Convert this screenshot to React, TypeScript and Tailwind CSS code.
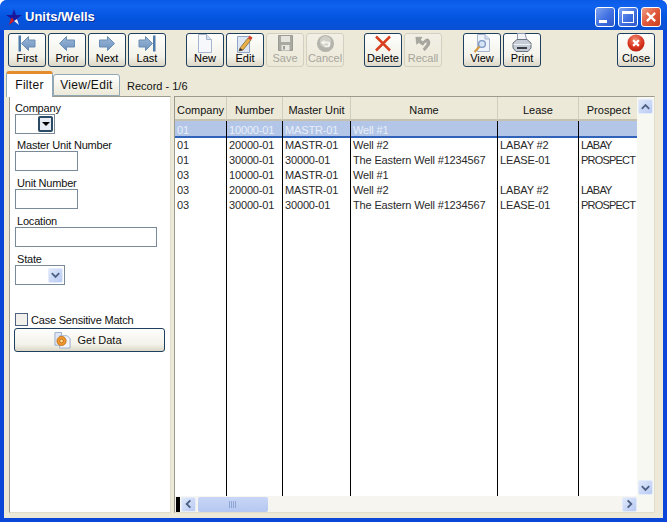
const font = "[font-family:'Liberation_Sans',Arial,sans-serif]";

function ArrowIcon({ dir, bar }: { dir: 'left' | 'right'; bar?: boolean }) {
  return (
    <svg width="18" height="17" viewBox="0 0 18 17" className={dir === 'right' ? '-scale-x-100' : ''}>
      <defs>
        <linearGradient id="arr" x1="0" y1="0" x2="0" y2="1">
          <stop offset="0" stopColor="#9db8d8" />
          <stop offset="1" stopColor="#6d92bf" />
        </linearGradient>
      </defs>
      {bar ? (
        <>
          <rect x="0.5" y="0.5" width="2.5" height="16" fill="#4f7ba8" />
          <path d="M3.5 8.5 L10.5 1.5 V5 H17 V12 H10.5 V15.5 Z" fill="url(#arr)" stroke="#6a8db5" />
        </>
      ) : (
        <path d="M1.5 8.5 L8.5 1.5 V5 H16.5 V12 H8.5 V15.5 Z" fill="url(#arr)" stroke="#6a8db5" />
      )}
    </svg>
  );
}

function DocIcon() {
  return (
    <svg width="18" height="19" viewBox="0 0 18 19">
      <path d="M2.5 0.5 H10.5 L15.5 5.5 V18.5 H2.5 Z" fill="#f6f8fc" stroke="#a6b6d0" />
      <path d="M10.5 0.5 V5.5 H15.5" fill="#d9e1ef" stroke="#a6b6d0" />
    </svg>
  );
}

function EditIcon() {
  return (
    <svg width="18" height="19" viewBox="0 0 18 19">
      <path d="M1.5 2.5 H13.5 V18.5 H1.5 Z" fill="#dfe6f4" stroke="#93a5c6" />
      <path d="M4 14 L12 4 L15 6 L7 16 L3 17 Z" fill="#e8b048" stroke="#7a5c30" strokeWidth="0.7" />
      <path d="M12 4 L13.7 1.6 L16.6 3.8 L15 6 Z" fill="#d8402c" />
      <path d="M3 17 L4 14 L7 16 Z" fill="#33343a" />
    </svg>
  );
}

function SaveIcon() {
  return (
    <svg width="15" height="16" viewBox="0 0 15 16">
      <path d="M0.5 0.5 H14.5 V15.5 H0.5 Z" fill="#a9a9a2" stroke="#9b9b94" />
      <rect x="3" y="1" width="9" height="6" fill="#e6e5dd" />
      <rect x="3.5" y="10" width="8" height="5.5" fill="#e9e8e0" />
      <rect x="5" y="11" width="2" height="3.5" fill="#9d9d96" />
    </svg>
  );
}

function CancelIcon() {
  return (
    <svg width="19" height="19" viewBox="0 0 20 20">
      <circle cx="10" cy="10" r="9" fill="#b4b3ab" />
      <circle cx="10" cy="8" r="6" fill="#cfcec7" />
      <path d="M5 9 L9 6 V8 H12.5 Q15 8 15 11 Q15 14 12 14 H9 V12 H12 Q13 12 13 11 Q13 10 12 10 H9 V12 Z" fill="#f4f3ee" />
    </svg>
  );
}

function DeleteIcon() {
  return (
    <svg width="18" height="17" viewBox="0 0 18 17">
      <path d="M2 1.5 L16 15.5 M16 1.5 L2 15.5" stroke="#d8401f" strokeWidth="2.5" />
    </svg>
  );
}

function RecallIcon() {
  return (
    <svg width="18" height="17" viewBox="0 0 20 18">
      <path d="M2 2 L9 2 L7 5 L10 7 Q13 3 16 4 Q19 7 17 11 L12 17 L10 15 L14 10 Q15 8 14 7 Q12 7 10 11 L5 8 L3 10 Z" fill="#a8a79f" stroke="#8f8e87" strokeWidth="0.5" />
    </svg>
  );
}

function ViewIcon() {
  return (
    <svg width="18" height="19" viewBox="0 0 18 19">
      <path d="M4.5 0.5 H12 L16.5 5 V17.5 H4.5 Z" fill="#eef2fa" stroke="#a6b6d0" />
      <path d="M12 0.5 V5 H16.5" fill="#d9e1ef" stroke="#a6b6d0" />
      <circle cx="9" cy="10" r="3.4" fill="#d5e4f6" stroke="#7c98c0" strokeWidth="1.3" />
      <path d="M6.5 12.5 L1.5 18" stroke="#d59a42" strokeWidth="2" />
    </svg>
  );
}

function PrintIcon() {
  return (
    <svg width="20" height="20" viewBox="0 0 20 20">
      <path d="M5.5 0.5 H13 L15 8 H5.5 Z" fill="#f2f4f8" stroke="#8f9bb0" />
      <path d="M1 10 L5 6.5 H15 L19 10 V15 L16 18.5 H4 L1 15 Z" fill="#c6ccd6" stroke="#69727f" />
      <path d="M1.5 11.5 H18.5" stroke="#eef0f4" />
      <rect x="5" y="14" width="10" height="2" fill="#3a3f47" />
    </svg>
  );
}

function CloseIcon() {
  return (
    <svg width="18" height="18" viewBox="0 0 20 20">
      <defs>
        <radialGradient id="cl" cx="0.45" cy="0.3" r="0.8">
          <stop offset="0" stopColor="#f08a70" />
          <stop offset="0.6" stopColor="#d8321c" />
          <stop offset="1" stopColor="#a8200f" />
        </radialGradient>
      </defs>
      <circle cx="10" cy="10" r="9.5" fill="url(#cl)" />
      <path d="M6.8 6.8 L13.2 13.2 M13.2 6.8 L6.8 13.2" stroke="#fff" strokeWidth="2.4" />
    </svg>
  );
}

function GearDocIcon() {
  return (
    <svg width="17" height="17" viewBox="0 0 18 18">
      <path d="M1 0.5 H8 V14 H1 Z" fill="#dfe6f3" stroke="#9aaccb" />
      <path d="M6 4 H14 L17 7 V17 H6 Z" fill="#f1f4fa" stroke="#9aaccb" />
      <circle cx="8" cy="9.5" r="4.8" fill="#ee9a2e" stroke="#c8701a" />
      <circle cx="8" cy="9.5" r="2" fill="#f8d890" stroke="#c8701a" />
    </svg>
  );
}

type Tool = { label: string; icon: React.ReactNode; off?: boolean };

function ToolButton({ label, icon, off }: Tool) {
  return (
    <button
      className={
        'flex flex-col items-center w-[38px] h-[34px] rounded-[3px] border text-[11px] leading-[13px] ' +
        (off
          ? 'border-[#d3d0c2] text-[#a6a59c] bg-[linear-gradient(#f2f0e6,#ece9d8)]'
          : 'border-[#1f3f5f] text-black bg-[linear-gradient(#fefefd,#f3f2ea_70%,#dcd8c8)]')
      }
    >
      <span className="h-[18px] flex items-center justify-center">{icon}</span>
      <span>{label}</span>
    </button>
  );
}

function StarIcon() {
  return (
    <svg width="16" height="16" viewBox="0 0 16 16">
      <path d="M8 0 L10 6 H16 L11 9.5 L13 16 L8 12 L3 16 L5 9.5 L0 6 H6 Z" fill="#1a1a9c" />
      <path d="M5 9.5 L3 16 L8 12 L6.5 9 Z" fill="#d02028" />
      <path d="M8 12 L13 16 L11 10 Z" fill="#f2f2f8" />
    </svg>
  );
}

function TitleButton({ kind }: { kind: 'min' | 'max' | 'close' }) {
  const bg =
    kind === 'close'
      ? 'bg-[linear-gradient(135deg,#f0a08a,#e0583a_50%,#c8401f)]'
      : 'bg-[linear-gradient(135deg,#7fa4f0,#3f6fe0_55%,#2f58c8)]';
  return (
    <div className={'w-[20px] h-[20px] rounded-[3px] border border-white flex items-center justify-center ' + bg}>
      {kind === 'min' && <div className="w-[8px] h-[3px] bg-white self-end mb-[3px] mr-[4px]" />}
      {kind === 'max' && <div className="w-[12px] h-[12px] border border-white border-t-[3px]" />}
      {kind === 'close' && (
        <svg width="12" height="12" viewBox="0 0 13 13">
          <path d="M2 2 L11 11 M11 2 L2 11" stroke="#fff" strokeWidth="2.4" />
        </svg>
      )}
    </div>
  );
}

function Chevron({ dir }: { dir: 'up' | 'down' | 'left' | 'right' }) {
  const d = {
    up: 'M3 9 L7 5 L11 9',
    down: 'M3 5 L7 9 L11 5',
    left: 'M9 3 L5 7 L9 11',
    right: 'M5 3 L9 7 L5 11',
  }[dir];
  return (
    <div className="w-[15px] h-[15px] rounded-[2px] flex items-center justify-center bg-[linear-gradient(135deg,#dfe8fb,#b9cbf3)] border border-[#e4ecfb]">
      <svg width="14" height="14" viewBox="0 0 14 14">
        <path d={d} fill="none" stroke="#4d6185" strokeWidth="2" />
      </svg>
    </div>
  );
}

const columns = [
  { title: 'Company', w: 'w-[52px]', cells: ['01', '01', '01', '03', '03', '03'] },
  { title: 'Number', w: 'w-[56px]', cells: ['10000-01', '20000-01', '30000-01', '10000-01', '20000-01', '30000-01'] },
  { title: 'Master Unit', w: 'w-[68px]', cells: ['MASTR-01', 'MASTR-01', '30000-01', 'MASTR-01', 'MASTR-01', '30000-01'] },
  {
    title: 'Name',
    w: 'w-[147px]',
    cells: ['Well #1', 'Well #2', 'The Eastern Well #1234567', 'Well #1', 'Well #2', 'The Eastern Well #1234567'],
  },
  { title: 'Lease', w: 'w-[81px]', cells: ['', 'LABAY #2', 'LEASE-01', '', 'LABAY #2', 'LEASE-01'] },
  { title: 'Prospect', w: 'w-[59px]', cells: ['', 'LABAY', 'PROSPECT', '', 'LABAY', 'PROSPECT'] },
];

function GridColumn({ title, w, cells, last }: (typeof columns)[number] & { last?: boolean }) {
  return (
    <div className={'flex flex-col shrink-0 ' + w}>
      <div
        className={
          'h-[24px] shrink-0 pt-[4px] bg-[#ece9d8] border-b-2 border-b-[#c4c1ae] flex items-center justify-center whitespace-nowrap' +
          (last ? '' : ' border-r border-r-[#d0cdbb]')
        }
      >
        {title}
      </div>
      <div className={'flex-1 min-h-0' + (last ? ' tracking-[-0.8px]' : ' tracking-[-0.15px] border-r border-black')}>
        {cells.map((c, i) => (
          <div
            key={i}
            className={
              'whitespace-nowrap px-[2px] ' +
              (i === 0
                ? 'h-[17px] pt-[1px] leading-[17px] bg-[#b3c6e7] text-[#e8eef8] border-b-2 border-[#2f62b8]'
                : 'h-[15px] leading-[15px] text-[#2a2a2a]')
            }
          >
            {c}
          </div>
        ))}
      </div>
    </div>
  );
}

function Field({ label, w }: { label: string; w: string }) {
  return (
    <div className="flex flex-col">
      <label className="pl-[2px] h-[13px] leading-[15px]">{label}</label>
      <div className={'h-[20px] border border-[#7b8a99] bg-white ' + w} />
    </div>
  );
}

export default function App() {
  return (
    <div className={'w-[667px] h-[522px] flex flex-col rounded-t-[7px] overflow-hidden bg-[#0a46d8] text-[11px] text-[#111] ' + font}>
      {/* Title bar */}
      <div className="h-[30px] shrink-0 flex items-center pt-[3px] pl-[6px] pr-[6px] bg-[linear-gradient(#0a5ae6,#0f62ee_20%,#0354df_60%,#0a50d4)]">
        <StarIcon />
        <span className="ml-[3px] text-white text-[13px] font-bold [text-shadow:1px_1px_#0b2f94]">Units/Wells</span>
        <div className="ml-auto flex gap-[3px]">
          <TitleButton kind="min" />
          <TitleButton kind="max" />
          <TitleButton kind="close" />
        </div>
      </div>

      {/* Body */}
      <div className="mx-[4px] mb-[4px] flex-1 min-h-0 bg-[#ece9d8] flex flex-col">
        {/* Toolbar */}
        <div className="flex pl-[4px] pt-[3px] pr-[8px] h-[38px] shrink-0">
          <div className="flex gap-[2px]">
            <ToolButton label="First" icon={<ArrowIcon dir="left" bar />} />
            <ToolButton label="Prior" icon={<ArrowIcon dir="left" />} />
            <ToolButton label="Next" icon={<ArrowIcon dir="right" />} />
            <ToolButton label="Last" icon={<ArrowIcon dir="right" bar />} />
          </div>
          <div className="flex gap-[2px] ml-[20px]">
            <ToolButton label="New" icon={<DocIcon />} />
            <ToolButton label="Edit" icon={<EditIcon />} />
            <ToolButton label="Save" icon={<SaveIcon />} off />
            <ToolButton label="Cancel" icon={<CancelIcon />} off />
          </div>
          <div className="flex gap-[2px] ml-[20px]">
            <ToolButton label="Delete" icon={<DeleteIcon />} />
            <ToolButton label="Recall" icon={<RecallIcon />} off />
          </div>
          <div className="flex gap-[2px] ml-[21px]">
            <ToolButton label="View" icon={<ViewIcon />} />
            <ToolButton label="Print" icon={<PrintIcon />} />
          </div>
          <div className="ml-auto">
            <ToolButton label="Close" icon={<CloseIcon />} />
          </div>
        </div>

        {/* Tabs */}
        <div className="flex items-end h-[28px] shrink-0 pl-[2px] text-[12px] tracking-[0.3px]">
          <div className="w-[47px] h-[26px] -mb-[1px] z-10 pb-[1px] bg-white rounded-t-[3px] border-x border-[#91a7b4] border-t-[3px] border-t-[#e68b2c] flex items-center justify-center">
            Filter
          </div>
          <div className="w-[67px] h-[22px] rounded-t-[3px] border border-[#91a7b4] bg-[linear-gradient(#fff,#ece9d8)] flex items-center justify-center">
            View/Edit
          </div>
          <span className="ml-[7px] text-[11px] leading-[20px] tracking-normal">Record - 1/6</span>
        </div>

        {/* Main panels */}
        <div className="flex-1 min-h-0 flex pl-[5px] pr-[8px] pb-[5px] gap-[3px]">
          <div className="w-[162px] flex flex-col bg-white border border-[#9c9a8c] border-b-[#e0ddcc] border-r-[#e0ddcc] pl-[5px] pt-[4px] tracking-[-0.2px]">
            <div className="flex flex-col">
              <label className="h-[13px] leading-[15px]">Company</label>
              <div className="w-[40px] h-[20px] border border-[#7b8a99] flex justify-end items-center pr-[1px]">
                <div className="w-[15px] h-[16px] rounded-[2px] border-2 border-[#2b4a66] bg-[#e8ecf4] flex items-center justify-center">
                  <div className="border-x-[4px] border-x-transparent border-t-[4px] border-t-black" />
                </div>
              </div>
            </div>
            <div className="flex flex-col gap-[5px] mt-[4px]">
              <Field label="Master Unit Number" w="w-[63px]" />
              <Field label="Unit Number" w="w-[63px]" />
              <Field label="Location" w="w-[142px]" />
              <div className="flex flex-col">
                <label className="pl-[2px] h-[13px] leading-[15px]">State</label>
                <div className="w-[50px] h-[20px] border border-[#7b8a99] flex justify-end items-center pr-[1px]">
                  <Chevron dir="down" />
                </div>
              </div>
            </div>
            <div className="flex items-center gap-[3px] mt-[28px] h-[13px]">
              <div className="w-[13px] h-[13px] border border-[#4d6185] bg-[#f1f0ea]" />
              <span className="pt-[1px]">Case Sensitive Match</span>
            </div>
            <button className="mt-[2px] -ml-[1px] w-[151px] h-[24px] rounded-[3px] border border-[#1f3f5f] bg-[linear-gradient(#fefefd,#f3f2ea_70%,#dcd8c8)] flex items-center justify-center gap-[6px] pr-[3px] tracking-normal">
              <GearDocIcon />
              Get Data
            </button>
          </div>

          <div className="flex-1 min-w-0 flex bg-white border border-[#9c9a8c] border-b-[#e0ddcc] border-r-[#e0ddcc]">
            <div className="flex-1 min-w-0 flex flex-col">
              <div className="flex-1 min-h-0 flex">
                {columns.map((c, i) => (
                  <GridColumn key={c.title} {...c} last={i === columns.length - 1} />
                ))}
              </div>
              <div className="h-[16px] shrink-0 flex items-center pl-[1px] bg-[#f6f5ef]">
                <div className="w-[4px] h-[15px] bg-black mr-[1px]" />
                <Chevron dir="left" />
                <div className="ml-[2px] w-[70px] h-[15px] rounded-[2px] bg-[linear-gradient(#c8d6f6,#b5c8f2)] flex items-center justify-center">
                  <div className="w-[8px] h-[7px] bg-[repeating-linear-gradient(90deg,#8fa5d4_0,#8fa5d4_1px,transparent_1px,transparent_2px)]" />
                </div>
                <div className="ml-auto">
                  <Chevron dir="right" />
                </div>
              </div>
            </div>
            <div className="w-[17px] shrink-0 flex flex-col justify-between items-center pt-[2px] pb-[17px] bg-[#f8f8f3]">
              <Chevron dir="up" />
              <Chevron dir="down" />
            </div>
          </div>
        </div>
      </div>
    </div>
  );
}
